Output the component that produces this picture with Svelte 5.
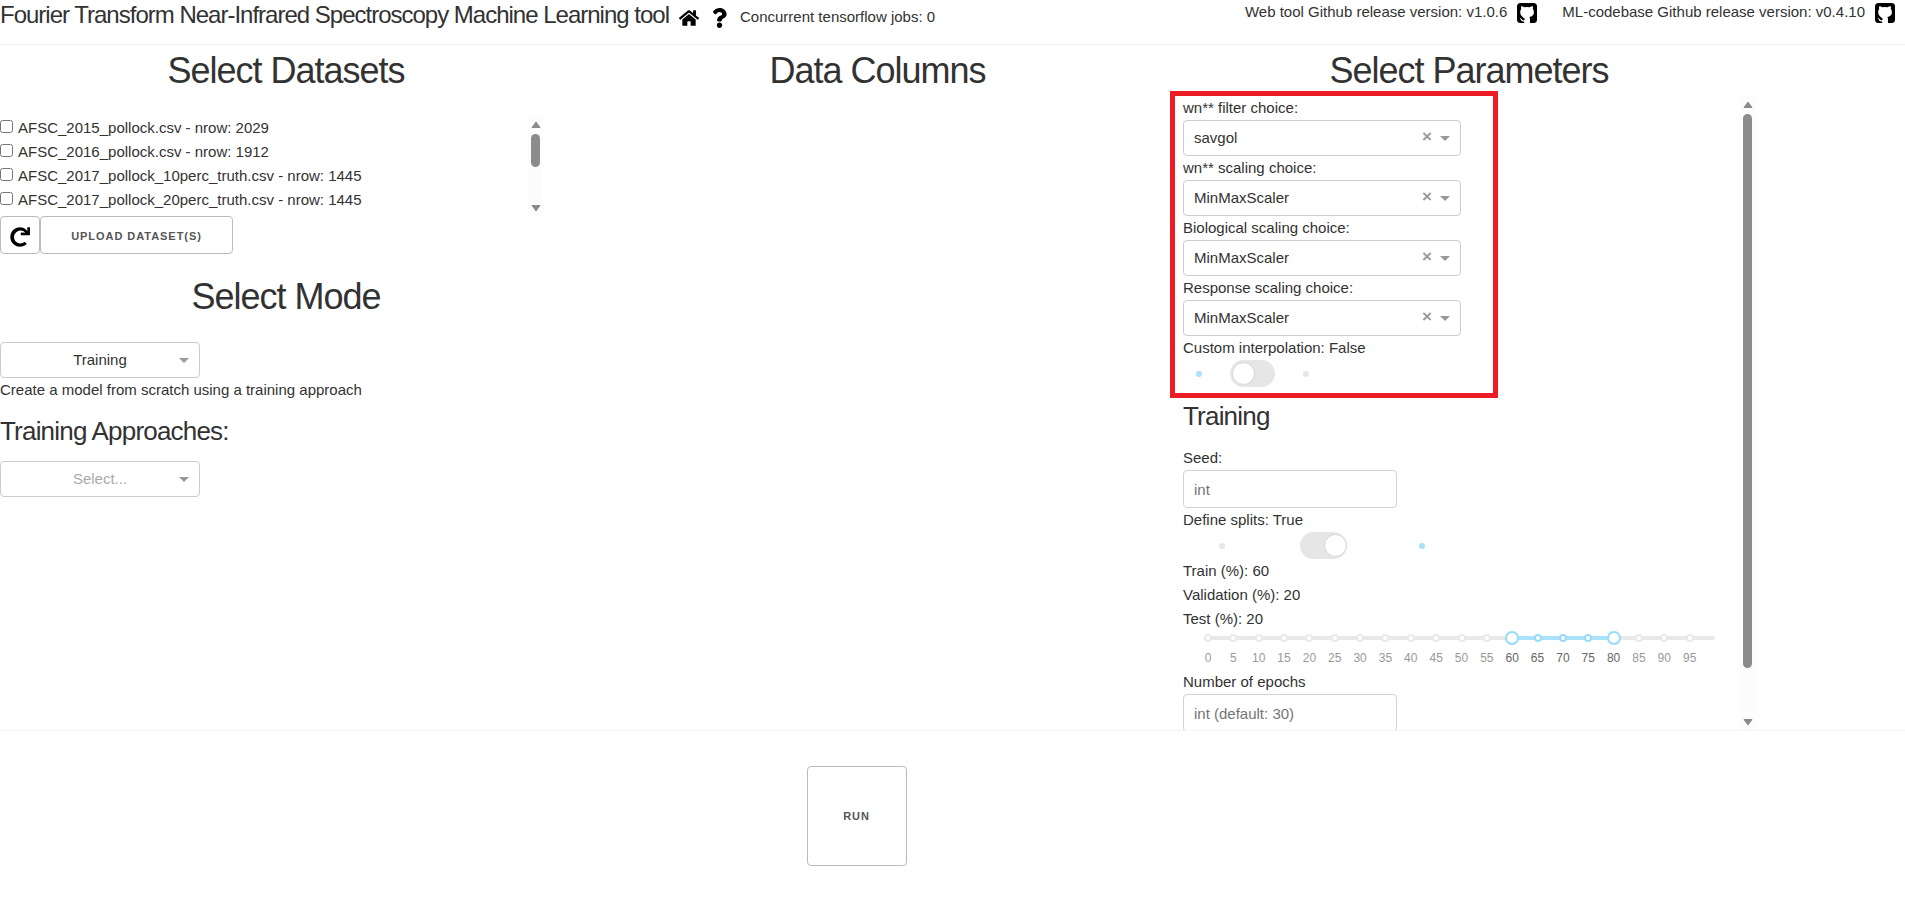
<script>
  const datasets = [
    'AFSC_2015_pollock.csv - nrow: 2029',
    'AFSC_2016_pollock.csv - nrow: 1912',
    'AFSC_2017_pollock_10perc_truth.csv - nrow: 1445',
    'AFSC_2017_pollock_20perc_truth.csv - nrow: 1445'
  ];
  const choices = [
    ['wn** filter choice:', 'savgol'],
    ['wn** scaling choice:', 'MinMaxScaler'],
    ['Biological scaling choice:', 'MinMaxScaler'],
    ['Response scaling choice:', 'MinMaxScaler']
  ];
  const low = 60;
  const high = 80;
  const span = 100;
  const marks = Array.from({ length: 20 }, (_, i) => i * 5);
</script>

{#snippet github()}
  <svg class="gh" viewBox="0 0 20 20">
    <rect width="20" height="20" rx="3.500" />
    <path fill="#fff" d="M4.300 3.200c.8-.2 2 .3 3.100 1.100a10 10 0 0 1 5.200 0c1.100-.8 2.300-1.300 3.100-1.100.4 1 .4 1.900.1 2.700.8.900 1.100 1.900 1.100 3.100 0 3.400-1.900 4.500-4.600 4.900.5.500.7 1.200.7 2V20H7.200v-1.600c-2.500.4-3-1-3.500-1.900-.3-.5-.7-.7-1-1 .9-.4 1.600.1 2.100.8.600.9 1.200 1.200 2.400.9.100-.6.300-1 .7-1.300C5.100 13.500 3.200 12.400 3.200 9c0-1.200.3-2.200 1-3.100-.3-.8-.3-1.700.1-2.700z" />
  </svg>
{/snippet}

{#snippet arrows(height)}
  <div class="bar">
    <svg viewBox="0 0 10 7"><path d="M5 1 9 6.500H1Z" /></svg>
    <div class="rail"><div class="thumb" style="height:{height}px"></div></div>
    <svg viewBox="0 0 10 7"><path d="M5 6 9 .5H1Z" /></svg>
  </div>
{/snippet}

<div class="page">
  <header>
    <div class="brand">
      <h5>Fourier Transform Near-Infrared Spectroscopy Machine Learning tool</h5>
      <svg class="home" viewBox="0 0 576 512"><path d="M280.400 148.300 96 300.100V464a16 16 0 0 0 16 16l112-.3a16 16 0 0 0 16-16V368a16 16 0 0 1 16-16h64a16 16 0 0 1 16 16v95.600a16 16 0 0 0 16 16l112 .3a16 16 0 0 0 16-16V300L295.700 148.300a12 12 0 0 0-15.300 0zM571.600 251.500 488 182.600V44a12 12 0 0 0-12-12h-56a12 12 0 0 0-12 12v72.600L318.500 43a48 48 0 0 0-61 0L4.300 251.500a12 12 0 0 0-1.600 16.900l25.500 31a12 12 0 0 0 16.900 1.600L280.400 107a12 12 0 0 1 15.300 0L531 301a12 12 0 0 0 16.900-1.600l25.500-31a12 12 0 0 0-1.800-16.900z" /></svg>
      <svg class="help" viewBox="0 0 384 512"><path d="M202 0C122 0 70 33 29 91c-8 11-5 25 5 33l43 33c11 8 26 6 34-4 25-32 43-50 82-50 30 0 67 19 67 48 0 22-18 33-48 50-34 19-80 43-80 103v15c0 13 11 24 24 24h72c13 0 24-11 24-24v-8c0-42 122-43 122-156C374 70 286 0 202 0zM192 374c-38 0-69 31-69 69s31 69 69 69 69-31 69-69-31-69-69-69z" /></svg>
      <span class="jobs">Concurrent tensorflow jobs: 0</span>
    </div>
    <div class="versions">
      <span>Web tool Github release version: v1.0.6</span>{@render github()}
      <span class="second">ML-codebase Github release version: v0.4.10</span>{@render github()}
    </div>
  </header>

  <main>
    <section class="left">
      <div class="data">
        <h2>Select Datasets</h2>
        <div class="scroll">
          <div class="files">
            {#each datasets as name}
              <label><input type="checkbox" /><span>{name}</span></label>
            {/each}
          </div>
          {@render arrows(33)}
        </div>
        <div class="buttons">
          <button class="reload" aria-label="Reload"><svg viewBox="0 0 512 512"><path d="M500 8h-47c-7 0-12 6-12 12l4 83A247 247 0 0 0 256 8C119 8 8 119 8 256s111 248 248 248c64 0 122-24 166-64 5-5 5-13 0-18l-34-34c-4-4-12-5-17-1a166 166 0 1 1 19-241l-101-5c-7 0-13 5-13 12v47c0 7 5 12 12 12h212c7 0 12-5 12-12V20c0-7-5-12-12-12z" /></svg></button>
          <button class="upload">Upload Dataset(s)</button>
        </div>
      </div>
      <div class="mode">
        <h2>Select Mode</h2>
        <div class="select small"><span>Training</span><i></i></div>
        <p>Create a model from scratch using a training approach</p>
        <h4>Training Approaches:</h4>
        <div class="select small empty"><span>Select...</span><i></i></div>
      </div>
    </section>

    <section class="middle"><h2>Data Columns</h2></section>

    <section class="right">
      <h2>Select Parameters</h2>
      <div class="params">
        <div class="form">
          <div class="frame">
            {#each choices as [label, value]}
              <div class="label">{label}</div>
              <div class="select"><span>{value}</span><b>×</b><i></i></div>
            {/each}
            <div class="label">Custom interpolation: False</div>
            <div class="toggle first"><em class="on"></em><div class="switch"><u></u></div><em></em></div>
          </div>
          <div class="training">
            <h4>Training</h4>
            <div class="label">Seed:</div>
            <input class="text" placeholder="int" />
            <div class="label">Define splits: True</div>
            <div class="toggle second"><em></em><div class="switch checked"><u></u></div><em class="on"></em></div>
            <div class="label">Train (%): 60</div>
            <div class="label">Validation (%): 20</div>
            <div class="label">Test (%): 20</div>
            <div class="slider">
              <div class="track"></div>
              <div class="range" style="left:{low}%;width:{high - low}%"></div>
              {#each marks as m}
                <div class="dot" class:active={m >= low && m <= high} class:handle={m === low || m === high} style="left:{(m / span) * 100}%"></div>
                <div class="mark" class:active={m >= low && m <= high} style="left:{(m / span) * 100}%">{m}</div>
              {/each}
            </div>
            <div class="label">Number of epochs</div>
            <input class="text" placeholder="int (default: 30)" />
          </div>
        </div>
        {@render arrows(554)}
      </div>
    </section>
  </main>

  <footer><button class="run">Run</button></footer>
</div>

<style>
  :global(body) { background: #fff; overflow: hidden; }
  .page { width: 1905px; height: 897px; overflow: hidden; font: 15px/24px "Liberation Sans", Arial, sans-serif; color: #323232; }
  .page * { box-sizing: border-box; }
  h2, h4, h5, p { margin: 0; font-weight: 400; }
  h2 { font-size: 36px; line-height: 45px; letter-spacing: -1px; text-align: center; }
  h4 { font-size: 26px; line-height: 35px; letter-spacing: -0.8px; }
  h5 { font-size: 24px; line-height: 33px; letter-spacing: -1px; white-space: nowrap; }
  header { height: 45px; border-bottom: 1px solid #f3f3f3; display: flex; justify-content: space-between; }
  .brand { display: flex; align-items: flex-start; height: 33px; margin-top: -2px; }
  .home { width: 20px; height: 18px; margin: 11px 0 0 10px; }
  .help { width: 15px; height: 20px; margin: 10px 0 0 13px; }
  .jobs { margin: 7px 0 0 13px; }
  .versions { display: flex; }
  .gh { width: 20px; height: 20px; margin: 3px 10px 0 10px; }
  .second { margin-left: 15px; }
  main { display: grid; grid-template-columns: 573px 577px 755px; height: 686px; border-bottom: 1px solid #f3f3f3; }
  .left, .middle, .right { padding-top: 3px; }
  .scroll { display: flex; width: 543px; height: 100px; margin-top: 23px; justify-content: space-between; }
  .files label { display: flex; height: 24px; }
  .files input { width: 13px; height: 13px; margin: 4px 5px 0 0; }
  .bar { width: 15px; height: 100%; background: #fcfcfc; display: flex; flex-direction: column; align-items: center; padding: 5px 0 4px; }
  .bar svg { width: 10px; height: 7px; flex: none; fill: #8b8b8b; stroke: #8b8b8b; stroke-width: 1; stroke-linejoin: round; }
  .rail { flex: 1; padding-top: 6px; }
  .thumb { width: 9px; border-radius: 5px; background: #8b8b8b; }
  .buttons { display: flex; }
  button { display: flex; align-items: center; justify-content: center; background: #fff; border: 1px solid #bbb; border-radius: 4px; padding: 0; color: #555; font: 600 11px/38px "Liberation Sans", Arial, sans-serif; letter-spacing: 0.95px; text-transform: uppercase; }
  .reload { width: 40px; height: 38px; }
  .reload svg { width: 20px; height: 20px; margin-top: 3px; }
  .upload { width: 193px; height: 38px; padding-top: 2px; }
  .mode { margin-top: 20px; }
  .data h2, .mode h2 { width: 572px; }
  .mode .select { margin-top: 23px; }
  .mode h4 { margin-top: 12px; }
  .mode h4 + .select { margin-top: 12px; }
  .select { width: 278px; height: 36px; border: 1px solid #ccc; border-radius: 4px; background: #fff; display: flex; align-items: center; padding: 0 10px; }
  .select span { flex: 1; }
  .select i { border: 5px solid transparent; border-top-color: #999; border-bottom: 0; }
  .select b { color: #999; font-weight: 700; font-size: 17px; margin-right: 8px; height: 26px; }
  .small { width: 200px; }
  .small span { text-align: center; padding-left: 10px; }
  .empty span { color: #aaa; }
  .middle h2 { padding-left: 32px; width: 577px; }
  .right h2 { width: 638px; }
  .params { display: flex; height: 637px; margin-left: 20px; width: 585px; justify-content: space-between; }
  .params > .bar { margin-top: 3px; height: 634px; }
  .form { width: 560px; overflow: hidden; height: 639px; margin-top: -2px; }
  .frame { width: 328px; height: 307px; border: 5px solid #ed1c24; padding: 0 8px; }
  .training { padding: 1px 0 0 13px; }
  .training h4 { margin-bottom: 12px; }
  .toggle { display: flex; align-items: center; justify-content: space-between; height: 27px; }
  .first { width: 113px; margin-left: 13px; }
  .second.toggle { width: 206px; margin-left: 36px; }
  em { width: 6px; height: 6px; border-radius: 50%; background: #e6e6e6; }
  em.on { background: #abe2fb; }
  .switch { width: 45px; height: 27px; background: #e6e6e6; border-radius: 14px; padding: 2px; display: flex; }
  .checked { width: 47px; justify-content: flex-end; padding-right: 0; position: relative; left: 1px; }
  u { width: 23px; height: 23px; border-radius: 50%; background: #fff; border: 1px solid #d5d5d5; }
  .text { display: block; width: 214px; height: 38px; padding: 6px 10px; border: 1px solid #d1d1d1; border-radius: 4px; font: 15px "Liberation Sans", Arial, sans-serif; }
  .text::placeholder { color: #757575; }
  .slider { position: relative; width: 507px; height: 39px; margin-left: 25px; }
  .track, .range { position: absolute; top: 5px; height: 4px; border-radius: 2px; background: #e9e9e9; width: 100%; }
  .range { background: #abe2fb; }
  .dot { position: absolute; top: 3px; width: 8px; height: 8px; margin-left: -4px; border: 2px solid #e9e9e9; background: #fff; border-radius: 50%; }
  .dot.active { border-color: #96dbfa; }
  .dot.handle { top: 0; width: 14px; height: 14px; margin-left: -7px; }
  .mark { position: absolute; top: 18px; width: 30px; margin-left: -15px; text-align: center; font-size: 12px; line-height: 18px; color: #999; }
  .mark.active { color: #666; }
  footer { display: flex; justify-content: center; padding: 35px 192px 0 0; }
  .run { width: 100px; height: 100px; }
</style>
